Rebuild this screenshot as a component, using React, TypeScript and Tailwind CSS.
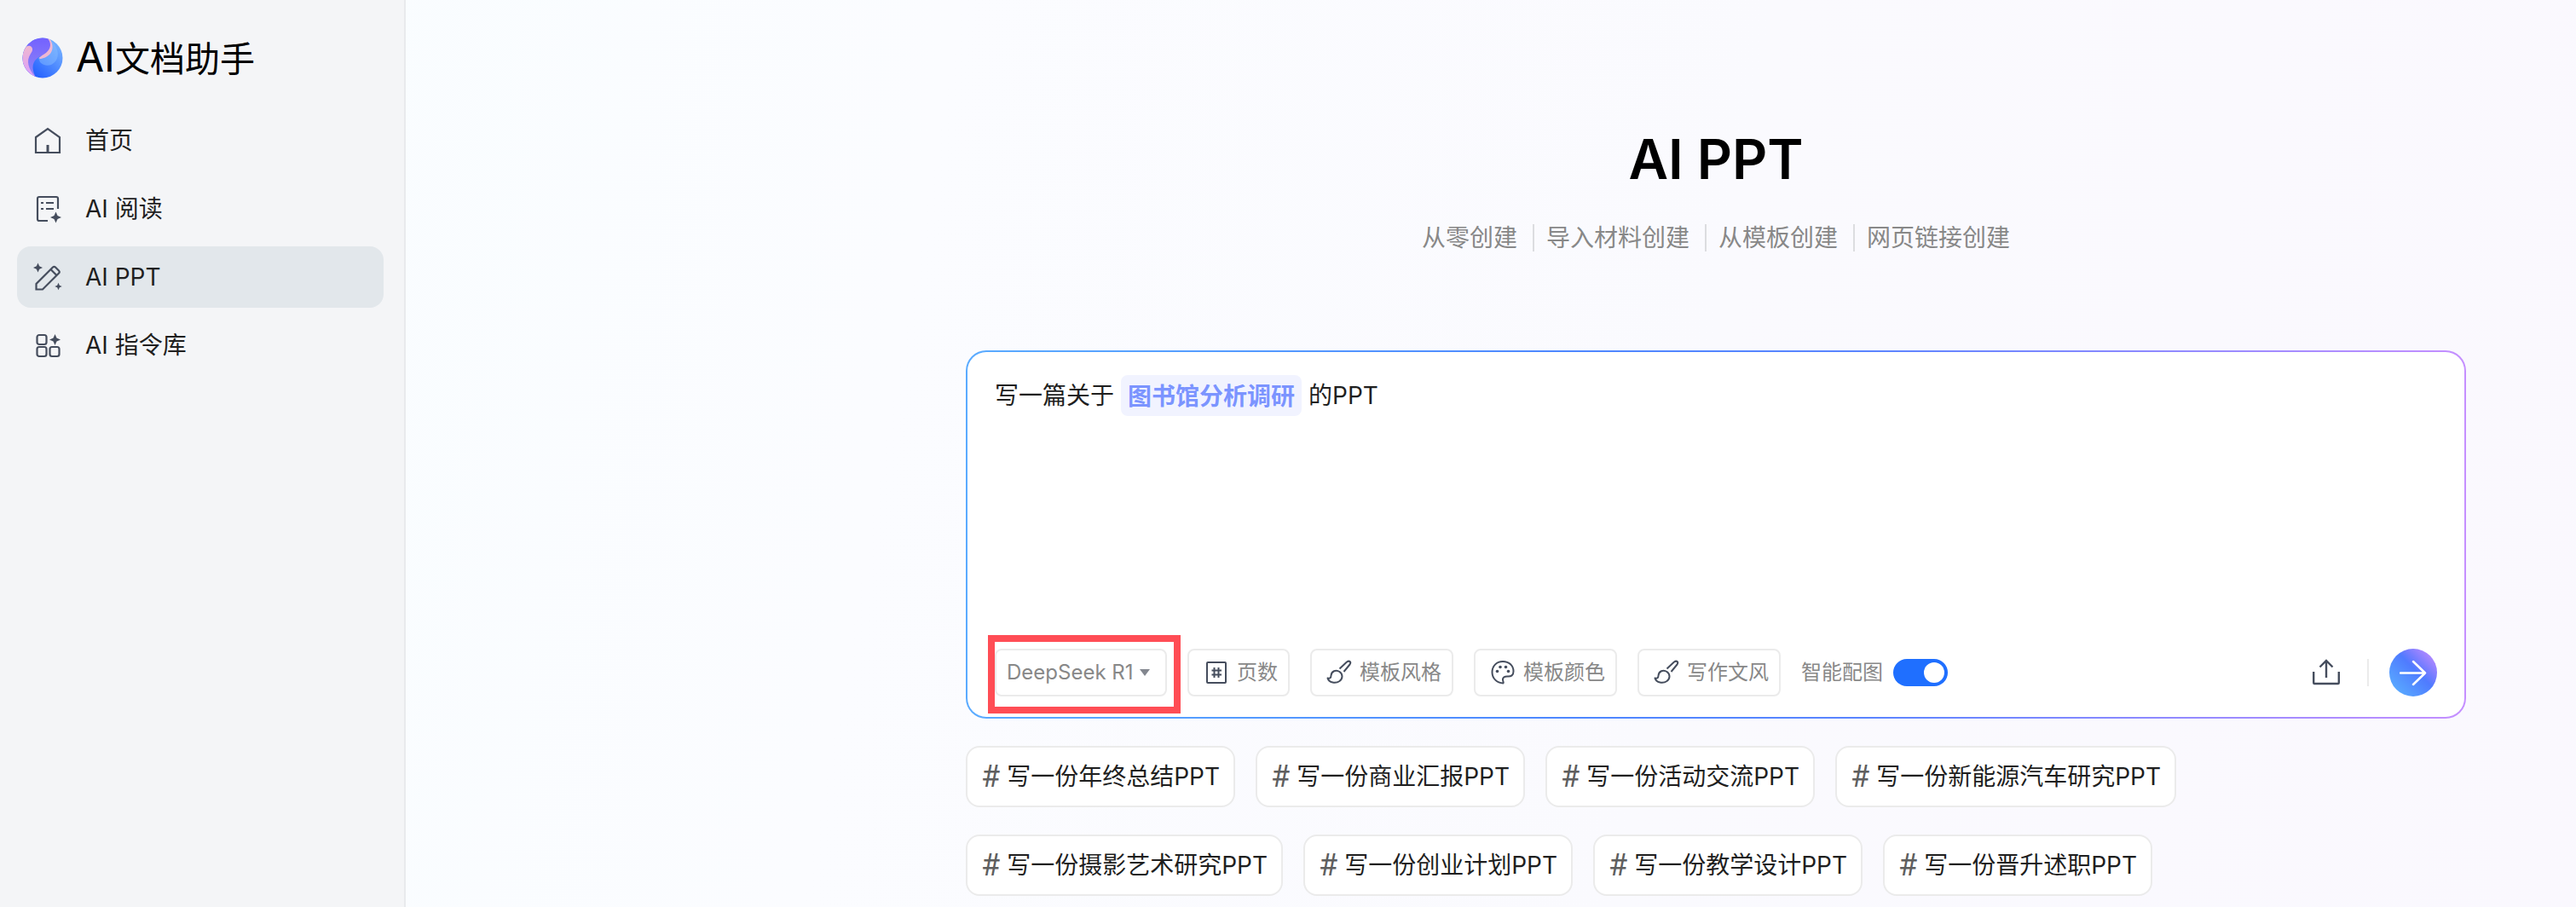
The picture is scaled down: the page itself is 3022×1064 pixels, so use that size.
import React, { useState } from 'react';

type IconProps = { className?: string };

const SPARK = 'M0 -6.5L2 -2L6.5 0L2 2L0 6.5L-2 2L-6.5 0L-2 -2Z';

const LogoIcon = () => (
  <svg className="size-12 shrink-0" viewBox="0 0 48 48" aria-hidden="true">
    <defs>
      <linearGradient id="logo-sky" x1=".2" y1="1" x2="1" y2=".2">
        <stop offset="0" stopColor="#1a56ff" />
        <stop offset="1" stopColor="#78b4ff" />
      </linearGradient>
      <linearGradient id="logo-violet" x1="0" y1="0" x2="0" y2="1">
        <stop offset="0" stopColor="#7361ff" />
        <stop offset="1" stopColor="#9089f4" />
      </linearGradient>
      <linearGradient id="logo-pink" x1="0" y1="0" x2="0" y2="1">
        <stop offset="0" stopColor="#efb8cf" />
        <stop offset="1" stopColor="#d99bff" />
      </linearGradient>
      <clipPath id="logo-clip">
        <circle cx="24" cy="24" r="23.5" />
      </clipPath>
    </defs>
    <g clipPath="url(#logo-clip)">
      <rect width="48" height="48" fill="url(#logo-sky)" />
      <path d="M30 0C44 10 46 26 34 32C29 34 24 32 21 29L19 24L34 14Z" fill="#8cc0ff" opacity=".45" />
      <path d="M28 0H31C39 9 37 22 22 25C20 25 19 24 21 23L30 14Z" fill="#efb8d2" />
      <path d="M0 0H29C35 6 34 13 28 18C24 21 20 22 17 25C11 30 11 39 17 48H0Z" fill="url(#logo-violet)" />
      <path d="M0 18C2 10 8 8 11 11C14 15 10 18 8 23C5 30 9 41 18 48H0Z" fill="url(#logo-pink)" />
    </g>
  </svg>
);

const HomeIcon = ({ className }: IconProps) => (
  <svg className={className} viewBox="0 0 32 32" fill="none" stroke="currentColor" strokeWidth="2.2" aria-hidden="true">
    <path d="M2 12L16 2L30 12V30H2Z" />
    <path d="M16 30V21" strokeWidth="3" />
  </svg>
);

const ReadIcon = ({ className }: IconProps) => (
  <svg className={className} viewBox="0 0 32 32" fill="none" stroke="currentColor" strokeWidth="2.2" aria-hidden="true">
    <path d="M16 30H6Q4 30 4 28V4Q4 2 6 2H26Q28 2 28 4V16" />
    <path d="M8 9H11M14 9H23M8 16H11M14 16H23" />
    <path d={SPARK} transform="translate(25.5 26)" fill="currentColor" stroke="none" />
  </svg>
);

const PenIcon = ({ className }: IconProps) => (
  <svg className={className} viewBox="0 0 32 32" fill="none" stroke="currentColor" strokeWidth="2.2" aria-hidden="true">
    <path d="M2.5 30.5V24L22 4.5Q23.5 3 25 4.5L29 8.5Q30.5 10 29 11.5L10 30.5Z" />
    <path d="M19.5 7L26.5 14" />
    <path d={SPARK} transform="translate(4.5 5) scale(.85)" fill="currentColor" stroke="none" />
    <path d={SPARK} transform="translate(28.5 27) scale(.65)" fill="currentColor" stroke="none" />
  </svg>
);

const GridIcon = ({ className }: IconProps) => (
  <svg className={className} viewBox="0 0 32 32" fill="none" stroke="currentColor" strokeWidth="2.2" aria-hidden="true">
    <rect x="3.5" y="4" width="11" height="11" rx="2.5" />
    <rect x="3.5" y="18" width="11" height="11" rx="2.5" />
    <rect x="18.5" y="18" width="11" height="11" rx="2.5" />
    <path d={SPARK} transform="translate(24.5 9.5)" fill="currentColor" stroke="none" />
  </svg>
);

const PagesIcon = ({ className }: IconProps) => (
  <svg className={className} viewBox="0 0 32 32" fill="none" stroke="currentColor" strokeWidth="2" aria-hidden="true">
    <rect x="5" y="4" width="22" height="24" rx="1" />
    <path d="M13.5 10V22M18.5 10V22M10.5 13.5H22M10.5 18.5H22" />
  </svg>
);

const BrushIcon = ({ className }: IconProps) => (
  <svg className={className} viewBox="0 0 32 32" fill="none" stroke="currentColor" strokeWidth="2" strokeLinejoin="round" aria-hidden="true">
    <path d="M16.5 11.5L25 3.5C28 1.5 30.5 3.5 28.5 6.5L21.5 15" />
    <path d="M2.5 22.5C5 23.5 6.5 22 6.5 19.5C7 14.5 12 12 16.5 15C20.5 18 20.5 23 16.5 26C12 29 4 28 2.5 22.5Z" />
  </svg>
);

const PaletteIcon = ({ className }: IconProps) => (
  <svg className={className} viewBox="0 0 32 32" fill="none" stroke="currentColor" strokeWidth="2" strokeLinejoin="round" aria-hidden="true">
    <path d="M16 3C8.5 3 3.5 8.5 3.5 15.5C3.5 23 9 28 16.5 28.5C17.5 27 15.5 26 16 23.5C16.5 21 18 20.5 21 20.5C26 21 28.5 19 28.5 14.5C28.5 8 23.5 3 16 3Z" />
    <g fill="currentColor" stroke="none">
      <circle cx="9.5" cy="14.5" r="1.8" />
      <circle cx="13" cy="9.5" r="1.8" />
      <circle cx="19.5" cy="9.5" r="1.8" />
      <circle cx="22.5" cy="14.5" r="1.8" />
    </g>
  </svg>
);

const navItems = [
  { label: '首页', Icon: HomeIcon },
  { label: 'AI 阅读', Icon: ReadIcon },
  { label: 'AI PPT', Icon: PenIcon, active: true },
  { label: 'AI 指令库', Icon: GridIcon },
];

const createModes = ['从零创建', '导入材料创建', '从模板创建', '网页链接创建'];

const options = [
  { label: '页数', Icon: PagesIcon },
  { label: '模板风格', Icon: BrushIcon },
  { label: '模板颜色', Icon: PaletteIcon },
  { label: '写作文风', Icon: BrushIcon },
];

const suggestions = [
  ['写一份年终总结PPT', '写一份商业汇报PPT', '写一份活动交流PPT', '写一份新能源汽车研究PPT'],
  ['写一份摄影艺术研究PPT', '写一份创业计划PPT', '写一份教学设计PPT', '写一份晋升述职PPT'],
];

const Sidebar = () => (
  <aside className="w-[476px] shrink-0 border-r-2 border-[#e8eaed] bg-[#f4f5f7] px-5 pt-10">
    <div className="flex h-14 items-center gap-[15px] pl-1.5">
      <LogoIcon />
      <span className="text-[41px] leading-14 text-black">
        <span className="text-5xl leading-14">AI</span>文档助手
      </span>
    </div>
    <nav className="mt-[33px] mr-1 flex flex-col gap-2">
      {navItems.map(({ label, Icon, active }) => (
        <a
          key={label}
          href="#"
          aria-current={active ? 'page' : undefined}
          className={`flex h-18 items-center gap-7 rounded-2xl px-5 ${active ? 'bg-[#e2e7eb]' : ''}`}
        >
          <Icon className="size-8 overflow-visible text-[#454d5d]" />
          <span>{label}</span>
        </a>
      ))}
    </nav>
  </aside>
);

const Composer = () => {
  const [topic, setTopic] = useState('图书馆分析调研');
  const [autoImage, setAutoImage] = useState(true);

  return (
    <form
      onSubmit={(e) => e.preventDefault()}
      className="rounded-3xl bg-[linear-gradient(90deg,#5aabff_0%,#4d87ff_40%,#5a84ff_60%,#c58fff_100%)] p-0.5"
    >
      <div className="flex h-[428px] flex-col justify-between rounded-[22px] bg-white pt-[27px] pr-8 pb-6 pl-8">
        <label className="flex h-12 items-center gap-2">
          <span>写一篇关于</span>
          <input
            aria-label="主题"
            value={topic}
            onChange={(e) => setTopic(e.target.value)}
            className="h-12 w-[212px] rounded-lg bg-[#f1f3ff] px-2 pb-0.5 font-bold text-[#7b94ff] outline-none"
          />
          <span>的PPT</span>
        </label>

        <div className="flex h-14 items-center gap-6 text-2xl text-[#888888]">
          {/* model picker with its highlight frame */}
          <div className="relative">
            <select
              aria-label="模型"
              className="block h-14 w-[202px] appearance-none rounded-lg border-2 border-[#ebebeb] bg-white pl-3 outline-none"
            >
              <option>DeepSeek R1</option>
            </select>
            <svg className="pointer-events-none absolute top-6 right-5 h-2 w-3" viewBox="0 0 12 8" aria-hidden="true">
              <path d="M0 0H12L6 8Z" fill="#83878f" />
            </svg>
            <div className="pointer-events-none absolute -top-4 -right-4 -bottom-5 -left-2 border-8 border-[#ff4d55]" />
          </div>
          {options.map(({ label, Icon }) => (
            <button
              key={label}
              type="button"
              className="flex h-14 items-center gap-2 rounded-lg border-2 border-[#ebebeb] pr-3 pl-4"
            >
              <Icon className="size-8 text-[#454d5d]" />
              <span>{label}</span>
            </button>
          ))}
          <label className="flex items-center gap-3">
            <span>智能配图</span>
            <input
              type="checkbox"
              role="switch"
              checked={autoImage}
              onChange={(e) => setAutoImage(e.target.checked)}
              className="flex h-8 w-16 appearance-none items-center rounded-full bg-[#c9cdd4] px-1 before:size-6 before:rounded-full before:bg-white checked:justify-end checked:bg-[#1f6fff]"
            />
          </label>

          <div className="ml-auto flex items-center">
            <button type="button" aria-label="上传">
              <svg className="size-8 text-[#454d5d]" viewBox="0 0 32 32" fill="none" stroke="currentColor" strokeWidth="2.4" aria-hidden="true">
                <path d="M1.2 15V28Q1.2 29 2.2 29H29.8Q30.8 29 30.8 28V15" />
                <path d="M16 22V2M8.5 9.5L16 2L23.5 9.5" />
              </svg>
            </button>
            <span className="mr-6 ml-8 h-8 w-0.5 bg-[#ebebeb]" />
            <button
              type="submit"
              aria-label="发送"
              className="flex size-14 items-center justify-center rounded-full bg-[linear-gradient(45deg,#58a6ff_15%,#4f7bff_55%,#6f7cff_65%,#b98aff_90%)]"
            >
              <svg className="size-8" viewBox="0 0 32 32" fill="none" stroke="#fff" strokeWidth="2.5" strokeLinecap="round" strokeLinejoin="round" aria-hidden="true">
                <path d="M1 16.5H30M16 3L30 16.5L16 30" />
              </svg>
            </button>
          </div>
        </div>
      </div>
    </form>
  );
};

export default function App() {
  return (
    <div className="flex min-h-screen bg-[linear-gradient(100deg,#f8fdff_0%,#fbfcff_35%,#fafafe_65%,#faf8fe_100%)] font-['Inter','Noto_Sans_CJK_SC',sans-serif] text-[28px] leading-10 text-[#1f1f1f]">
      <Sidebar />
      <main className="min-w-0 flex-1 pt-[147px] pr-[129px] pb-3 pl-[657px]">
        <h1 className="text-center text-[64px] leading-20 font-semibold text-black">AI PPT</h1>
        <div className="mt-8 flex items-center justify-center text-[#888888]">
          {createModes.map((mode, i) => (
            <React.Fragment key={mode}>
              {i > 0 && <span className="mr-3.5 ml-4.5 h-8 w-0.5 bg-[#dcdde0]" />}
              <a href="#">{mode}</a>
            </React.Fragment>
          ))}
        </div>

        <div className="mt-28">
          <Composer />
        </div>

        <div className="mt-8 flex flex-col gap-8">
          {suggestions.map((row, i) => (
            <div key={i} className="flex gap-6">
              {row.map((text) => (
                <button
                  key={text}
                  type="button"
                  className="flex h-18 items-center gap-2 rounded-2xl border-2 border-[#ebebeb] bg-white px-4"
                >
                  <span className="font-['Roboto',sans-serif] text-4xl text-[#5f5f5f]">#</span>
                  <span>{text}</span>
                </button>
              ))}
            </div>
          ))}
        </div>
      </main>
    </div>
  );
}
